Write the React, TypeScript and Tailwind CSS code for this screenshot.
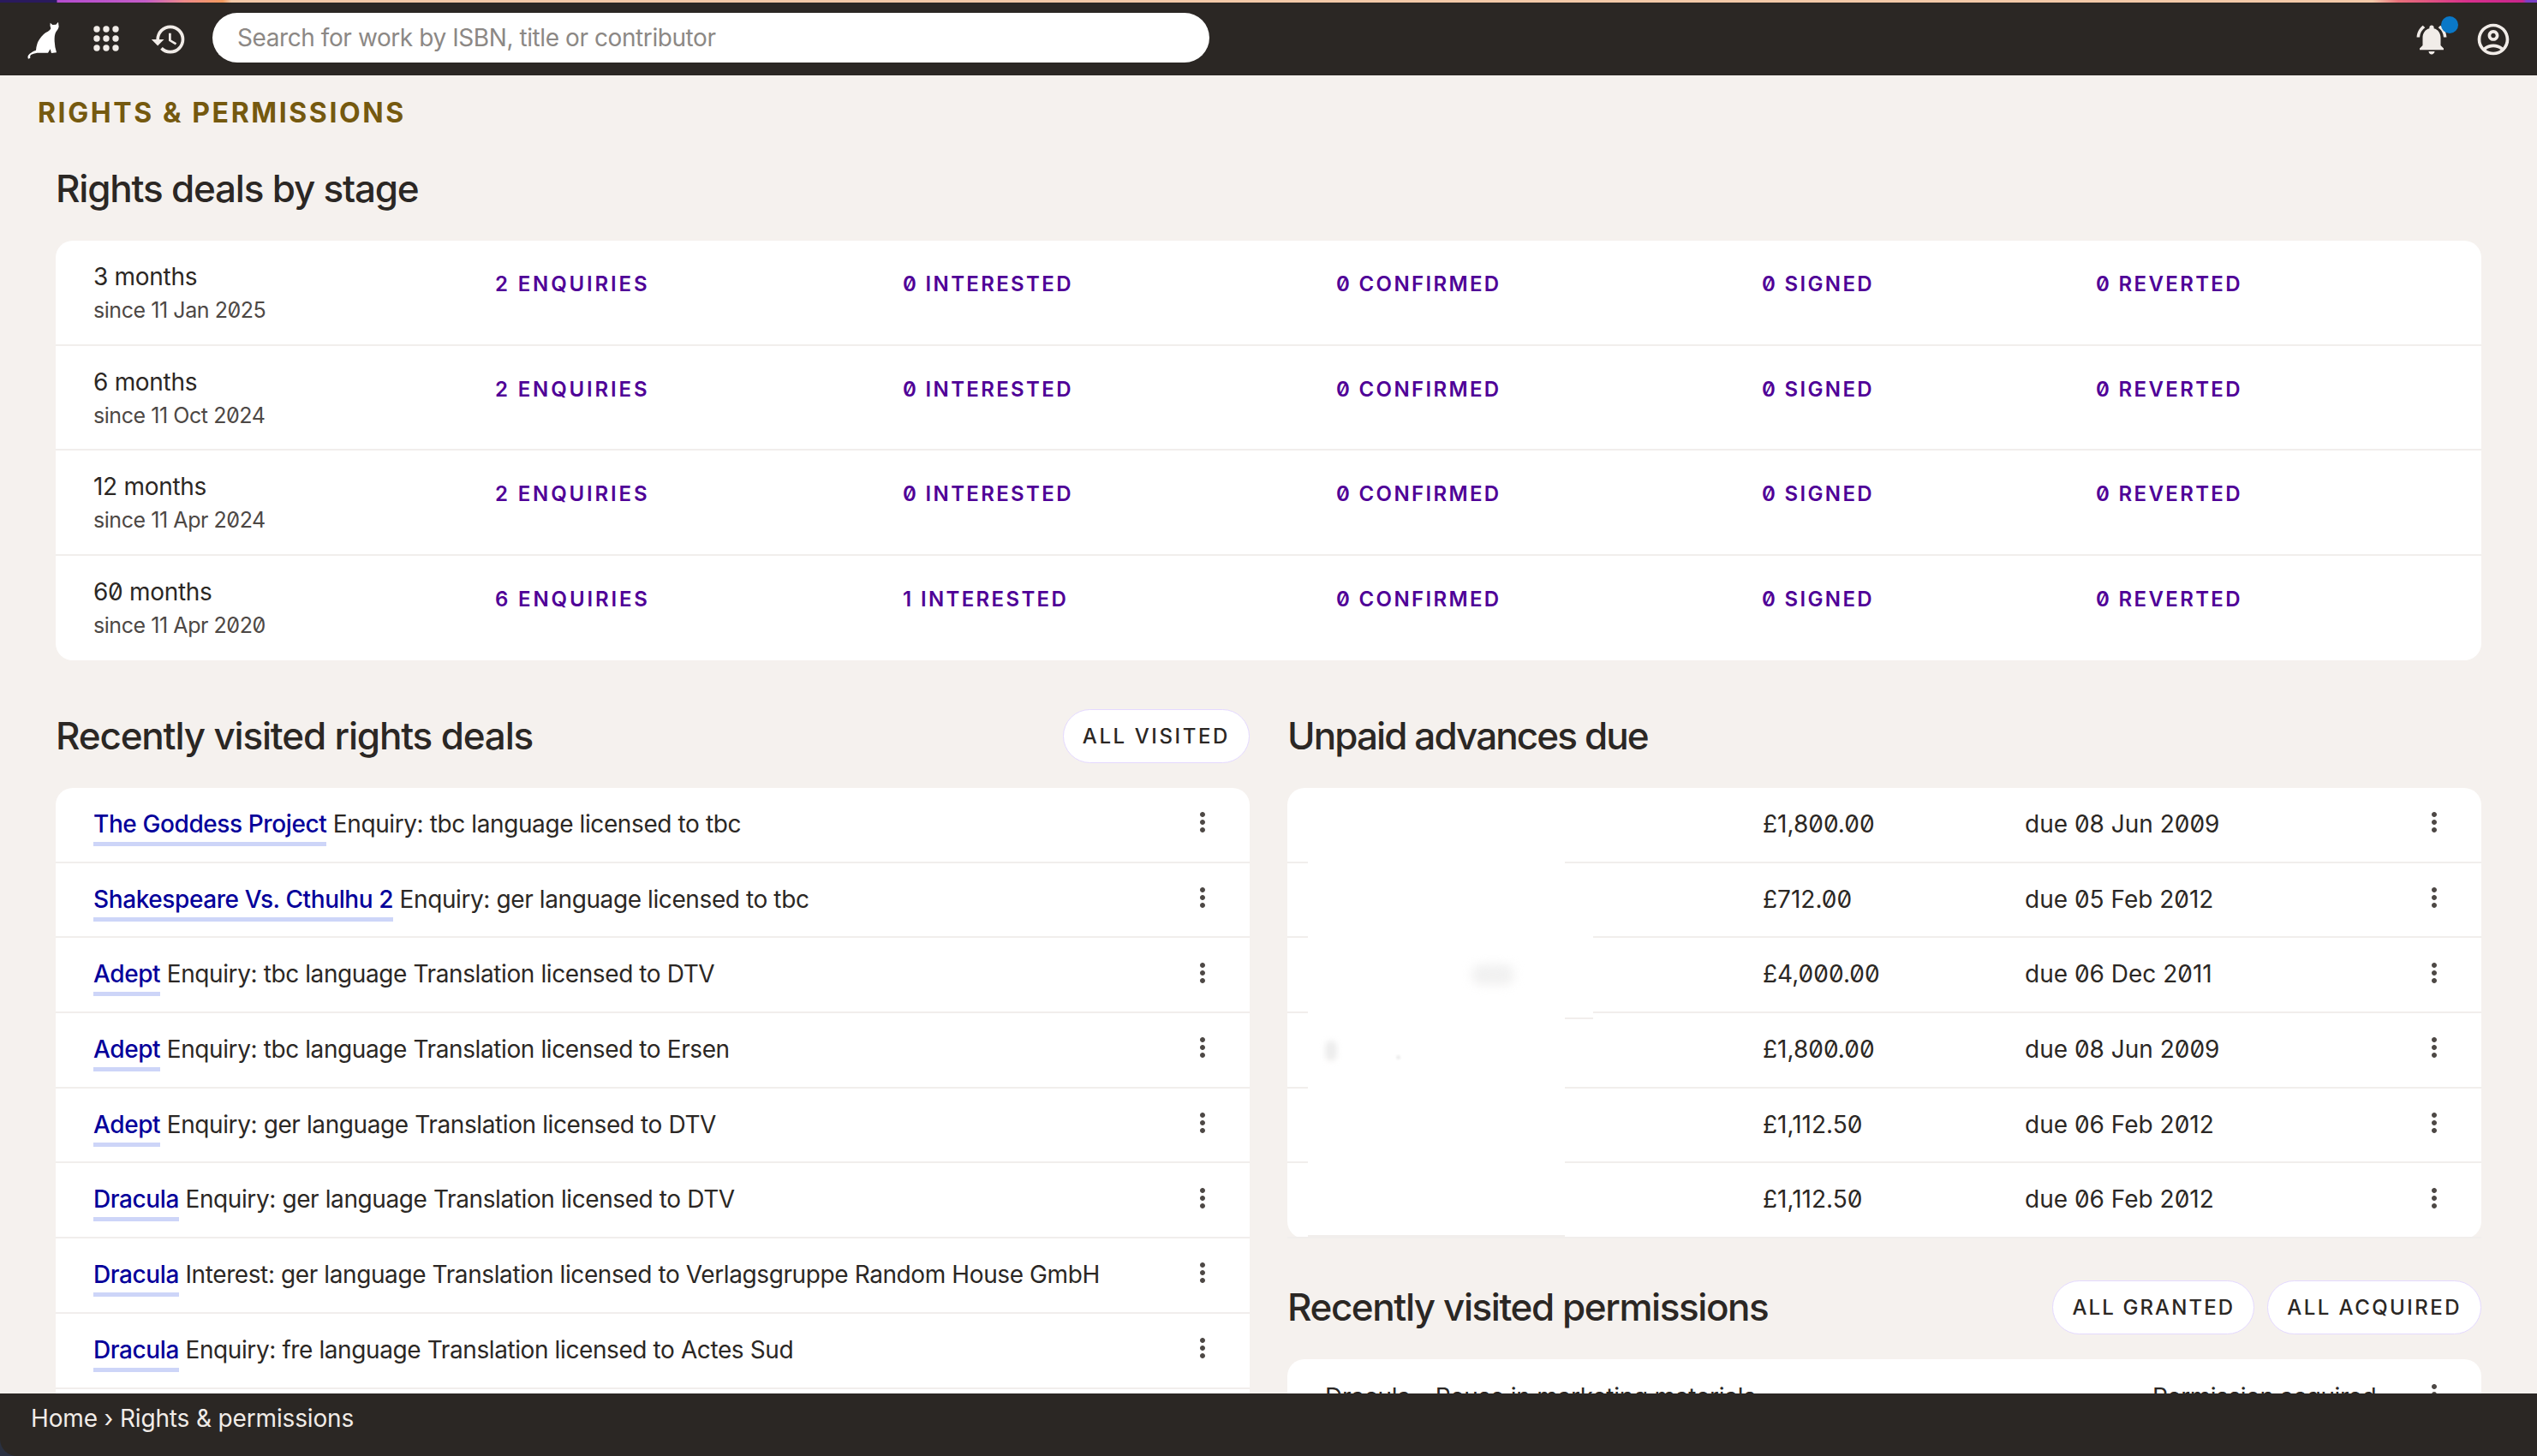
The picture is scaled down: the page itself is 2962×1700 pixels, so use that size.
import { MdHistory, MdMoreVert, MdNotificationsActive, MdOutlineAccountCircle } from "react-icons/md";

const stages = [
  ["3 months", "since 11 Jan 2025", "2 ENQUIRIES", "0 INTERESTED"],
  ["6 months", "since 11 Oct 2024", "2 ENQUIRIES", "0 INTERESTED"],
  ["12 months", "since 11 Apr 2024", "2 ENQUIRIES", "0 INTERESTED"],
  ["60 months", "since 11 Apr 2020", "6 ENQUIRIES", "1 INTERESTED"],
];

const deals = [
  ["The Goddess Project", "Enquiry: tbc language licensed to tbc"],
  ["Shakespeare Vs. Cthulhu 2", "Enquiry: ger language licensed to tbc"],
  ["Adept", "Enquiry: tbc language Translation licensed to DTV"],
  ["Adept", "Enquiry: tbc language Translation licensed to Ersen"],
  ["Adept", "Enquiry: ger language Translation licensed to DTV"],
  ["Dracula", "Enquiry: ger language Translation licensed to DTV"],
  ["Dracula", "Interest: ger language Translation licensed to Verlagsgruppe Random House GmbH"],
  ["Dracula", "Enquiry: fre language Translation licensed to Actes Sud"],
];

const advances = [
  ["£1,800.00", "due 08 Jun 2009"],
  ["£712.00", "due 05 Feb 2012"],
  ["£4,000.00", "due 06 Dec 2011"],
  ["£1,800.00", "due 08 Jun 2009"],
  ["£1,112.50", "due 06 Feb 2012"],
  ["£1,112.50", "due 06 Feb 2012"],
];

function More() {
  return <MdMoreVert className="w-[36px] h-[36px] text-[#4d4845] shrink-0 -mt-[5px]" />;
}

function Pill({ children, tracking }: { children: string; tracking: string }) {
  return (
    <button className={`h-[63px] px-[22px] rounded-full bg-white border border-[#e4d9ff] text-[24px] font-medium text-[#2b2724] ${tracking}`}>
      {children}
    </button>
  );
}

function Heading({ children, tracking }: { children: string; tracking: string }) {
  return <h2 className={`text-[44px] leading-[63px] font-medium text-[#2b2724] ${tracking}`}>{children}</h2>;
}

export default function App() {
  return (
    <div className="h-[1700px] flex flex-col overflow-hidden bg-[#2a3040] font-['Inter',sans-serif] slashed-zero text-[#2b2724]">
      <div className="h-[3px] shrink-0 bg-[linear-gradient(90deg,#2a1a5e_0,#2a1a5e_66px,#b44ccf_67px,#c45cc8_170px,#ef8a8a_215px,#f29a5e_260px,#f3c9a8_270px,#f3c9a8_2770px,#e8707a_2800px,#d8308c_2880px,#c8258c_2945px,#7a3fc8_2950px)]" />
      <header className="h-[85px] shrink-0 bg-[#2b2724] flex items-center pl-[28px] pr-[29px]">
        <svg viewBox="0 0 144 156" className="w-[48px] h-[52px] shrink-0" fill="#ffffff">
          <path d="M92 20 L100 27 L112 26 L120 17 L122 34 Q120 44 112 52 Q106 62 107 85 Q108 108 114 124 L96 126 L92 112 L84 125 L46 125 Q32 127 24 132 Q20 137 22 143 L15 146 Q10 136 20 128 Q34 118 42 116 Q44 92 54 78 Q66 58 84 50 Q92 46 94 40 Q90 30 92 20 Z" />
        </svg>
        <svg viewBox="0 0 30 30" className="w-[30px] h-[30px] ml-[33px] -mt-[2px] shrink-0" fill="#f1ece8">
          {[4, 15, 26].flatMap((y) => [4, 15, 26].map((x) => <circle key={`${x}-${y}`} cx={x} cy={y} r="3.7" />))}
        </svg>
        <MdHistory className="w-[44px] h-[44px] ml-[36px] text-[#f1ece8] shrink-0" />
        <div className="ml-[29px] w-[1164px] h-[58px] rounded-full bg-white flex items-center pl-[29px] text-[28px] tracking-[-0.42px] text-[#8c8885] -mt-[3px]">
          Search for work by ISBN, title or contributor
        </div>
        <div className="ml-auto flex items-center gap-[29px]">
          <div className="relative w-[42px] h-[42px]">
            <MdNotificationsActive className="w-[42px] h-[42px] text-[#f1ece8]" />
            <span className="absolute -top-[6px] right-[-10px] w-[20px] h-[20px] rounded-full bg-[#0a78c8]" />
          </div>
          <MdOutlineAccountCircle className="w-[44px] h-[44px] text-[#f1ece8]" />
        </div>
      </header>

      <main className="flex-1 min-h-0 overflow-hidden bg-[#f5f1ee] pl-[44px] pr-[65px] pt-[25px]">
        <h1 className="text-[32px] leading-[38px] font-bold tracking-[2.6px] text-[#75590f]">RIGHTS &amp; PERMISSIONS</h1>
        <div className="ml-[21px] mt-[38px]">
          <Heading tracking="tracking-[-1.2px]">Rights deals by stage</Heading>
          <div className="mt-[29px] bg-white rounded-[20px] divide-y-2 divide-[#f1eeec]">
            {stages.map((s) => (
              <div key={s[0]} className="h-[122.5px] pl-[44px] pt-[23px] grid grid-cols-[469px_476px_506px_497px_390px_1fr]">
                <div>
                  <div className="text-[28px] leading-[39px] tracking-[-0.3px]">{s[0]}</div>
                  <div className="text-[25px] leading-[39px] tracking-[-0.44px] text-[#4d4845]">{s[1]}</div>
                </div>
                <div className="pt-[8px] text-[24px] leading-[39px] font-semibold tracking-[2.85px] text-[#4f0097]">{s[2]}</div>
                {[s[3], "0 CONFIRMED", "0 SIGNED", "0 REVERTED"].map((t) => (
                  <div key={t} className="pt-[8px] text-[24px] leading-[39px] font-semibold tracking-[2.35px] text-[#4f0097]">{t}</div>
                ))}
              </div>
            ))}
          </div>

          <div className="mt-[57px] grid grid-cols-2 gap-[44px]">
            <section>
              <div className="flex items-center justify-between">
                <Heading tracking="tracking-[-1.17px]">Recently visited rights deals</Heading>
                <Pill tracking="tracking-[2.6px]">ALL VISITED</Pill>
              </div>
              <div className="mt-[29px] bg-white rounded-[20px] divide-y-2 divide-[#f1eeec]">
                {deals.map((d, i) => (
                  <div key={i} className="h-[87.7px] pl-[44px] pr-[37px] flex items-center justify-between text-[28px] tracking-[-0.4px]">
                    <div className="-mt-[2px]">
                      <span className="font-medium text-[#05009a] border-b-[5px] border-[#cdd5f8] pb-[4px]">{d[0]}</span> {d[1]}
                    </div>
                    <More />
                  </div>
                ))}
                <div className="h-[87.7px]" />
              </div>
            </section>

            <section>
              <div className="flex items-center justify-between">
                <Heading tracking="tracking-[-1.9px]">Unpaid advances due</Heading>
              </div>
              <div className="relative mt-[29px] bg-white rounded-[20px] divide-y-2 divide-[#f1eeec]">
                {advances.map((a, i) => (
                  <div key={i} className="h-[87.7px] pl-[555px] pr-[37px] flex items-center text-[28px]">
                    <div className="w-[306px] -mt-[2px]">{a[0]}</div>
                    <div className="flex-1 -mt-[2px]">{a[1]}</div>
                    <More />
                  </div>
                ))}
                <div className="absolute left-[24px] top-[2px] w-[300px] h-[522px] bg-white" />
                <div className="absolute left-[324px] top-[170px] w-[33px] h-[100px] bg-white" />
                <div className="absolute left-[215px] top-[206px] w-[50px] h-[24px] rounded-full bg-[#f1f1f1] blur-[6px]" />
                <div className="absolute left-[44px] top-[295px] w-[14px] h-[24px] rounded-full bg-[#ededed] blur-[3px]" />
                <div className="absolute left-[127px] top-[312px] w-[5px] h-[5px] rounded-full bg-[#eeeeee] blur-[1px]" />
              </div>

              <div className="mt-[49px] flex items-center justify-between">
                <Heading tracking="tracking-[-1.43px]">Recently visited permissions</Heading>
                <div className="flex gap-[15px]">
                  <Pill tracking="tracking-[2.1px]">ALL GRANTED</Pill>
                  <Pill tracking="tracking-[2.45px]">ALL ACQUIRED</Pill>
                </div>
              </div>
              <div className="mt-[29px] bg-white rounded-[20px]">
                <div className="h-[87.7px] pl-[44px] pr-[37px] flex items-center text-[28px]">
                  <div className="w-[966px] tracking-[-0.25px]">Dracula – Reuse in marketing materials</div>
                  <div className="flex-1 tracking-[-0.45px]">Permission acquired</div>
                  <More />
                </div>
              </div>
            </section>
          </div>
        </div>
      </main>

      <footer className="h-[73px] shrink-0 bg-[#2b2724] rounded-bl-[20px] pl-[36px] pt-[9px] text-[28px] leading-[40px] tracking-[-0.15px] text-[#f1ece8]">
        Home › Rights &amp; permissions
      </footer>
    </div>
  );
}
